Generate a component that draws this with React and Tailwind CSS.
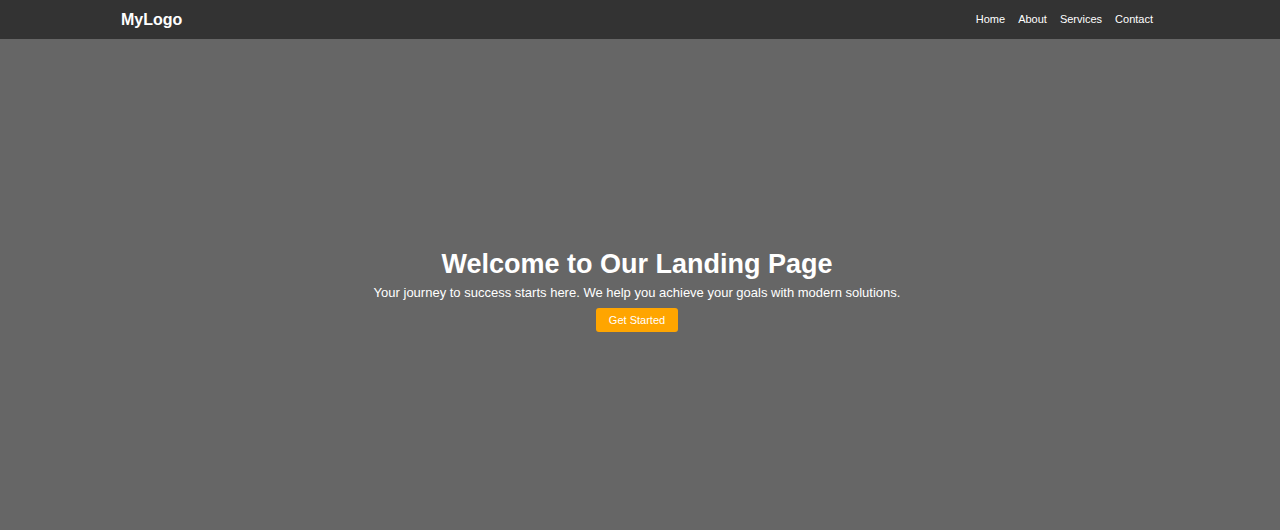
import React from 'react';

const links = ['Home', 'About', 'Services', 'Contact'];

export default function App() {
  return (
    <div className="min-h-[530px] flex flex-col bg-[#666666] font-['Liberation_Sans',Arial,sans-serif] text-white">
      {/* Header */}
      <header className="h-[39px] bg-[#333333] flex items-center justify-between pl-[121px] pr-[127px]">
        <div className="text-[16px] font-bold">MyLogo</div>
        <nav className="flex gap-[13px] text-[11px]">
          {links.map((l) => (
            <a key={l} href="#" className="text-white">{l}</a>
          ))}
        </nav>
      </header>

      {/* Hero */}
      <main className="flex-1 flex flex-col items-center justify-center text-center pt-[9px] pr-[6px]">
        <h1 className="text-[27px] font-bold leading-[32px] mt-[2px]">Welcome to Our Landing Page</h1>
        <p className="text-[13px] leading-[16px] mt-[5px]">Your journey to success starts here. We help you achieve your goals with modern solutions.</p>
        <button className="mt-[7px] w-[82px] h-[24px] bg-[#ffa500] rounded-[3px] text-[11px] text-white">Get Started</button>
      </main>
    </div>
  );
}
